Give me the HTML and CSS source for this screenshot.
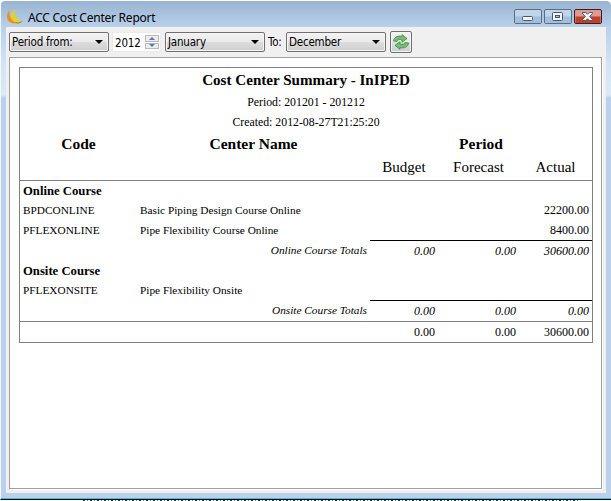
FILE: index.html
```html
<!DOCTYPE html>
<html lang="en">
<head>
<meta charset="utf-8">
<title>ACC Cost Center Report</title>
<link rel="stylesheet" href="styles.css">
</head>
<body>
<div class="window">
  <header class="titlebar">
    <svg class="app-icon" width="16" height="16" viewBox="0 0 16 16">
      <path d="M2.500 1.500C-1 5-.8 10.800 3 13.300c2 1.400 4.500 1.300 6.500.5C4.800 12 1.800 7.500 2.500 1.500z" fill="#ee8f16"/>
      <path d="M7.500 0C3.200 4.500 3.800 10.500 7.800 13c2.400 1.300 5.500.8 7.400-1C10.200 11.500 6.800 6 7.500 0z" fill="#e9d022"/>
      <path d="M7.500 13c2.800.9 5.800.4 8-1.300-.6 1.800-3.500 3-6.300 2.600z" fill="#8a7a18"/>
    </svg>
    <h1 class="title">ACC Cost Center Report</h1>
    <div class="controls">
      <svg class="control" width="28" height="15" viewBox="0 0 28 15">
        <rect class="glass" x=".5" y=".5" width="27" height="14" rx="1.500"/>
        <path d="M1 7.500h26V14H1z" fill="#a3bfdb"/>
        <rect class="mark" x="8.500" y="7.500" width="10" height="4" rx="1"/>
      </svg>
      <svg class="control" width="28" height="15" viewBox="0 0 28 15">
        <rect class="glass" x=".5" y=".5" width="27" height="14" rx="1.500"/>
        <path d="M1 7.500h26V14H1z" fill="#a3bfdb"/>
        <rect class="mark" x="8.500" y="3.500" width="10" height="8" rx="1"/>
        <rect x="11.500" y="6.500" width="4" height="2" fill="#a3bfdb" stroke="#4c566b"/>
      </svg>
      <svg class="control" width="28" height="15" viewBox="0 0 28 15">
        <rect x=".5" y=".5" width="27" height="14" rx="1.500" fill="#dc9c91" stroke="#4b1420"/>
        <path d="M1.500 7.500h25V14h-25z" fill="#bd4029"/>
        <path class="mark" d="M8.500 3.500h3.300l1.700 1.700 1.700-1.700h3.300v1L15.700 7.500l2.800 3v1h-3.300l-1.700-1.700-1.700 1.700H8.500v-1l2.800-3-2.800-3z"/>
      </svg>
    </div>
  </header>
  <main class="client">
    <div class="toolbar">
      <div class="combo combo-period"><span>Period from:</span><i class="arrow"></i></div>
      <div class="spinner"><span>2012</span><div class="steps"><i class="step up"></i><i class="step down"></i></div></div>
      <div class="combo combo-from"><span>January</span><i class="arrow"></i></div>
      <span class="to">To:</span>
      <div class="combo combo-to"><span>December</span><i class="arrow"></i></div>
      <button class="refresh" aria-label="Refresh">
        <svg width="18" height="16" viewBox="0 0 18 16" fill="#74bd72" stroke="#3c8c43" stroke-width=".8" stroke-linejoin="round">
          <path d="M1.500 7C2 3 6 1.300 10 2.400V.6l5 4-5 3.600V6C7.500 5 5.500 5.500 5 7.500z"/>
          <path d="M16.500 9c-.5 4-4.500 5.700-8.500 4.600v1.800l-5-4L8 7.800V10c2.500 1 4.500.5 5-1.500z"/>
        </svg>
      </button>
    </div>
    <section class="viewer">
      <table class="report">
        <colgroup><col class="c-code"><col class="c-name"><col class="c-budget"><col class="c-forecast"><col class="c-actual"></colgroup>
        <thead>
          <tr class="heading"><th colspan="5">Cost Center Summary - InIPED</th></tr>
          <tr class="meta"><td colspan="5">Period: 201201 - 201212</td></tr>
          <tr class="meta"><td colspan="5">Created: 2012-08-27T21:25:20</td></tr>
          <tr class="columns"><th>Code</th><th>Center Name</th><th colspan="3">Period</th></tr>
          <tr class="subcolumns"><td></td><td></td><td>Budget</td><td>Forecast</td><td>Actual</td></tr>
        </thead>
        <tbody>
          <tr class="group"><th colspan="5">Online Course</th></tr>
          <tr class="item short"><td>BPDCONLINE</td><td>Basic Piping Design Course Online</td><td></td><td></td><td>22200.00</td></tr>
          <tr class="item"><td>PFLEXONLINE</td><td>Pipe Flexibility Course Online</td><td></td><td></td><td>8400.00</td></tr>
          <tr class="totals"><td colspan="2">Online Course Totals</td><td>0.00</td><td>0.00</td><td>30600.00</td></tr>
          <tr class="group"><th colspan="5">Onsite Course</th></tr>
          <tr class="item short"><td>PFLEXONSITE</td><td>Pipe Flexibility Onsite</td><td></td><td></td><td></td></tr>
          <tr class="totals"><td colspan="2">Onsite Course Totals</td><td>0.00</td><td>0.00</td><td>0.00</td></tr>
        </tbody>
        <tfoot>
          <tr class="grand"><td></td><td></td><td>0.00</td><td>0.00</td><td>30600.00</td></tr>
        </tfoot>
      </table>
    </section>
  </main>
</div>
<div class="behind"></div>
</body>
</html>
```
FILE: styles.css
```css
* { box-sizing: border-box; }
body {
  margin: 0;
  width: 611px;
  height: 501px;
  overflow: hidden;
  background: #fff;
  color: #000;
}
.window {
  height: 500px;
  border-top: 1px solid #fff;
  border-left: 1px solid #f4f9fd;
  border-bottom: 1px solid #000;
  border-radius: 5px 5px 0 0;
  background: linear-gradient(#99b4d1 0, #b9d1ea 26px, #d3e4f5 65px, #dce9f7 94px, #b9d1ea 97px);
  box-shadow: inset 0 -1px #27c9e6;
  padding: 0 5px 6px;
}
.titlebar {
  display: flex;
  height: 26px;
}
.app-icon { margin: 8px 0 0 1px; }
.title {
  margin: 9px 0 0 5px;
  font: 12px/16px "Noto Sans", "Open Sans", sans-serif;
  letter-spacing: -.24px;
  flex: 1;
}
.controls {
  display: flex;
  gap: 2px;
  padding: 8px 4px 0 0;
}
.glass { fill: #c1d5ea; stroke: #566d8b; }
.mark { fill: #f4f4f4; stroke: #4c566b; }
.client {
  height: 466px;
  background: #f0f0f0;
  padding: 4px 3px;
}
.toolbar {
  display: flex;
  align-items: center;
  height: 22px;
  font: 11.5px/14px "DejaVu Sans Condensed", "DejaVu Sans", sans-serif;
  font-stretch: condensed;
  letter-spacing: -.2px;
}
.combo {
  display: flex;
  align-items: center;
  justify-content: space-between;
  height: 20px;
  padding: 0 5px 0 2px;
  border: 1px solid #707070;
  border-radius: 2px;
  background: linear-gradient(#f2f2f2, #ebebeb 48%, #dddddd 50%, #cfcfcf);
  box-shadow: inset 0 0 0 1px #f5f5f5;
}
.combo-period { width: 100px; }
.combo-from { width: 100px; margin-left: 4px; }
.combo-to { width: 100px; }
.arrow {
  border: 4px solid transparent;
  border-top-color: #000;
  border-bottom: 0;
}
.spinner {
  display: flex;
  width: 49px;
  height: 20px;
  margin-left: 3px;
  padding: 2px 1px 2px 2px;
  background: #fff;
  border: 1px solid #e8eaee;
  line-height: 17px;
  justify-content: space-between;
}
.steps { display: flex; flex-direction: column; gap: 1px; }
.step {
  display: flex;
  align-items: center;
  justify-content: center;
  width: 14px;
  height: 7px;
  border: 1px solid #b9b9b9;
  background: #ececec;
}
.step::after {
  content: "";
  border: 3px solid transparent;
}
.up::after { border-bottom-color: #5b73b4; border-top: 0; }
.down::after { border-top-color: #5b73b4; border-bottom: 0; }
.to { width: 21px; padding-left: 3px; }
.refresh {
  display: flex;
  align-items: center;
  justify-content: center;
  width: 22px;
  height: 22px;
  margin-left: 4px;
  padding: 0;
  border: 1px solid #707070;
  border-radius: 2px;
  background: linear-gradient(#f2f2f2, #ebebeb 48%, #dddddd 50%, #cfcfcf);
  box-shadow: inset 0 0 0 1px #f5f5f5;
}
.refresh svg { flex: none; }
.viewer {
  width: 593px;
  height: 432px;
  margin-top: 4px;
  padding: 9px;
  border: 1px solid #a0a0a0;
  background: #fff;
  box-shadow: 1px 1px #fff;
}
.report {
  width: 574px;
  table-layout: fixed;
  border-collapse: separate;
  border-spacing: 0;
  border: 1px solid #808080;
  font: 11.3px/15px "Liberation Serif", serif;
}
.c-code { width: 117px; }
.c-name { width: 233px; }
.c-budget { width: 68px; }
.c-forecast { width: 81px; }
.c-actual { width: 73px; }
.report th, .report td { padding: 0 3px; white-space: nowrap; }
.report .heading th { height: 24px; font-size: 15.1px; }
.report .meta td { height: 20px; font-size: 11.8px; text-align: center; }
.report .columns th { height: 23px; padding-bottom: 1px; font-size: 15.5px; }
.report .subcolumns td {
  height: 26px;
  padding-bottom: 1px;
  font-size: 15px;
  text-align: center;
  border-bottom: 1px solid #808080;
}
.report .group th { height: 20px; text-align: left; font-size: 12.7px; }
.item td, .totals td, .grand td { height: 20px; }
.item.short td { height: 19px; }
.item td:nth-child(n+3), .totals td, .grand td { text-align: right; }
.item td:last-child, .totals td:nth-child(n+2), .grand td { font-size: 12px; }
.totals td { height: 21px; font-style: italic; }
.totals td:nth-child(n+2) { border-top: 1px solid #000; }
.grand td { height: 21px; border-top: 1px solid #808080; }
.behind {
  height: 1px;
  margin: 0 33px 0 83px;
  background: repeating-linear-gradient(90deg, #25344f 0 2px, #fff 2px 4px, #9a6b3f 4px 5px, #fff 5px 7px);
}
```
